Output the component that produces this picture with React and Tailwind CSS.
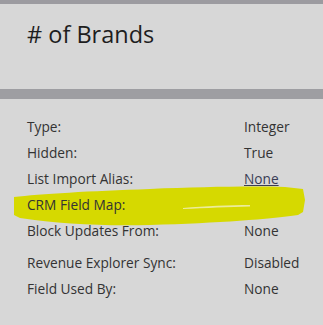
const rows = [
  { label: "Type:", value: "Integer" },
  { label: "Hidden:", value: "True" },
  { label: "List Import Alias:", value: "None", link: true },
  { label: "CRM Field Map:", value: "" },
  { label: "Block Updates From:", value: "None" },
  { label: "Revenue Explorer Sync:", value: "Disabled", gap: true },
  { label: "Field Used By:", value: "None" },
];

function Highlight() {
  return (
    <svg
      className="absolute left-0 top-0 pointer-events-none"
      width="323"
      height="325"
      viewBox="0 0 323 325"
    >
      <path
        d="M14 197 C40 194 90 191 150 189 C200 187 250 186 285 187 L303 189 L305 200 L303 212 L298 215 C270 219 220 223 150 225 C100 226 60 224 20 218 L14 215 Z"
        fill="#d6d900"
      />
      <path d="M183 208 C205 206 230 205 250 205 L250 206.5 C230 207 205 208 183 209 Z" fill="#ecec9a" />
    </svg>
  );
}

export default function App() {
  return (
    <div
      className="relative w-[323px] h-[325px] overflow-hidden bg-[#d7d7d7] text-[#2b2b2b]"
      style={{ fontFamily: '"Open Sans", sans-serif' }}
    >
      <div className="h-[4px] bg-[#9c9ba0]" />
      <div className="h-[85px] pl-[27px] pt-[15px]">
        <h1 className="text-[23.5px] leading-[30px] text-[#1e1e1e]"># of Brands</h1>
      </div>
      <div className="h-[10px] bg-[#9e9ea2]" />
      <Highlight />
      <div className="relative pt-[15px] pl-[27px] text-[13.7px] leading-[26px] text-[#333]">
        {rows.map((r) => (
          <div key={r.label} className={`flex ${r.gap ? "mt-[6px]" : ""}`}>
            <span className="w-[217px]">{r.label}</span>
            <span className={r.link ? "underline text-[#3a3d55]" : ""}>{r.value}</span>
          </div>
        ))}
      </div>
    </div>
  );
}
